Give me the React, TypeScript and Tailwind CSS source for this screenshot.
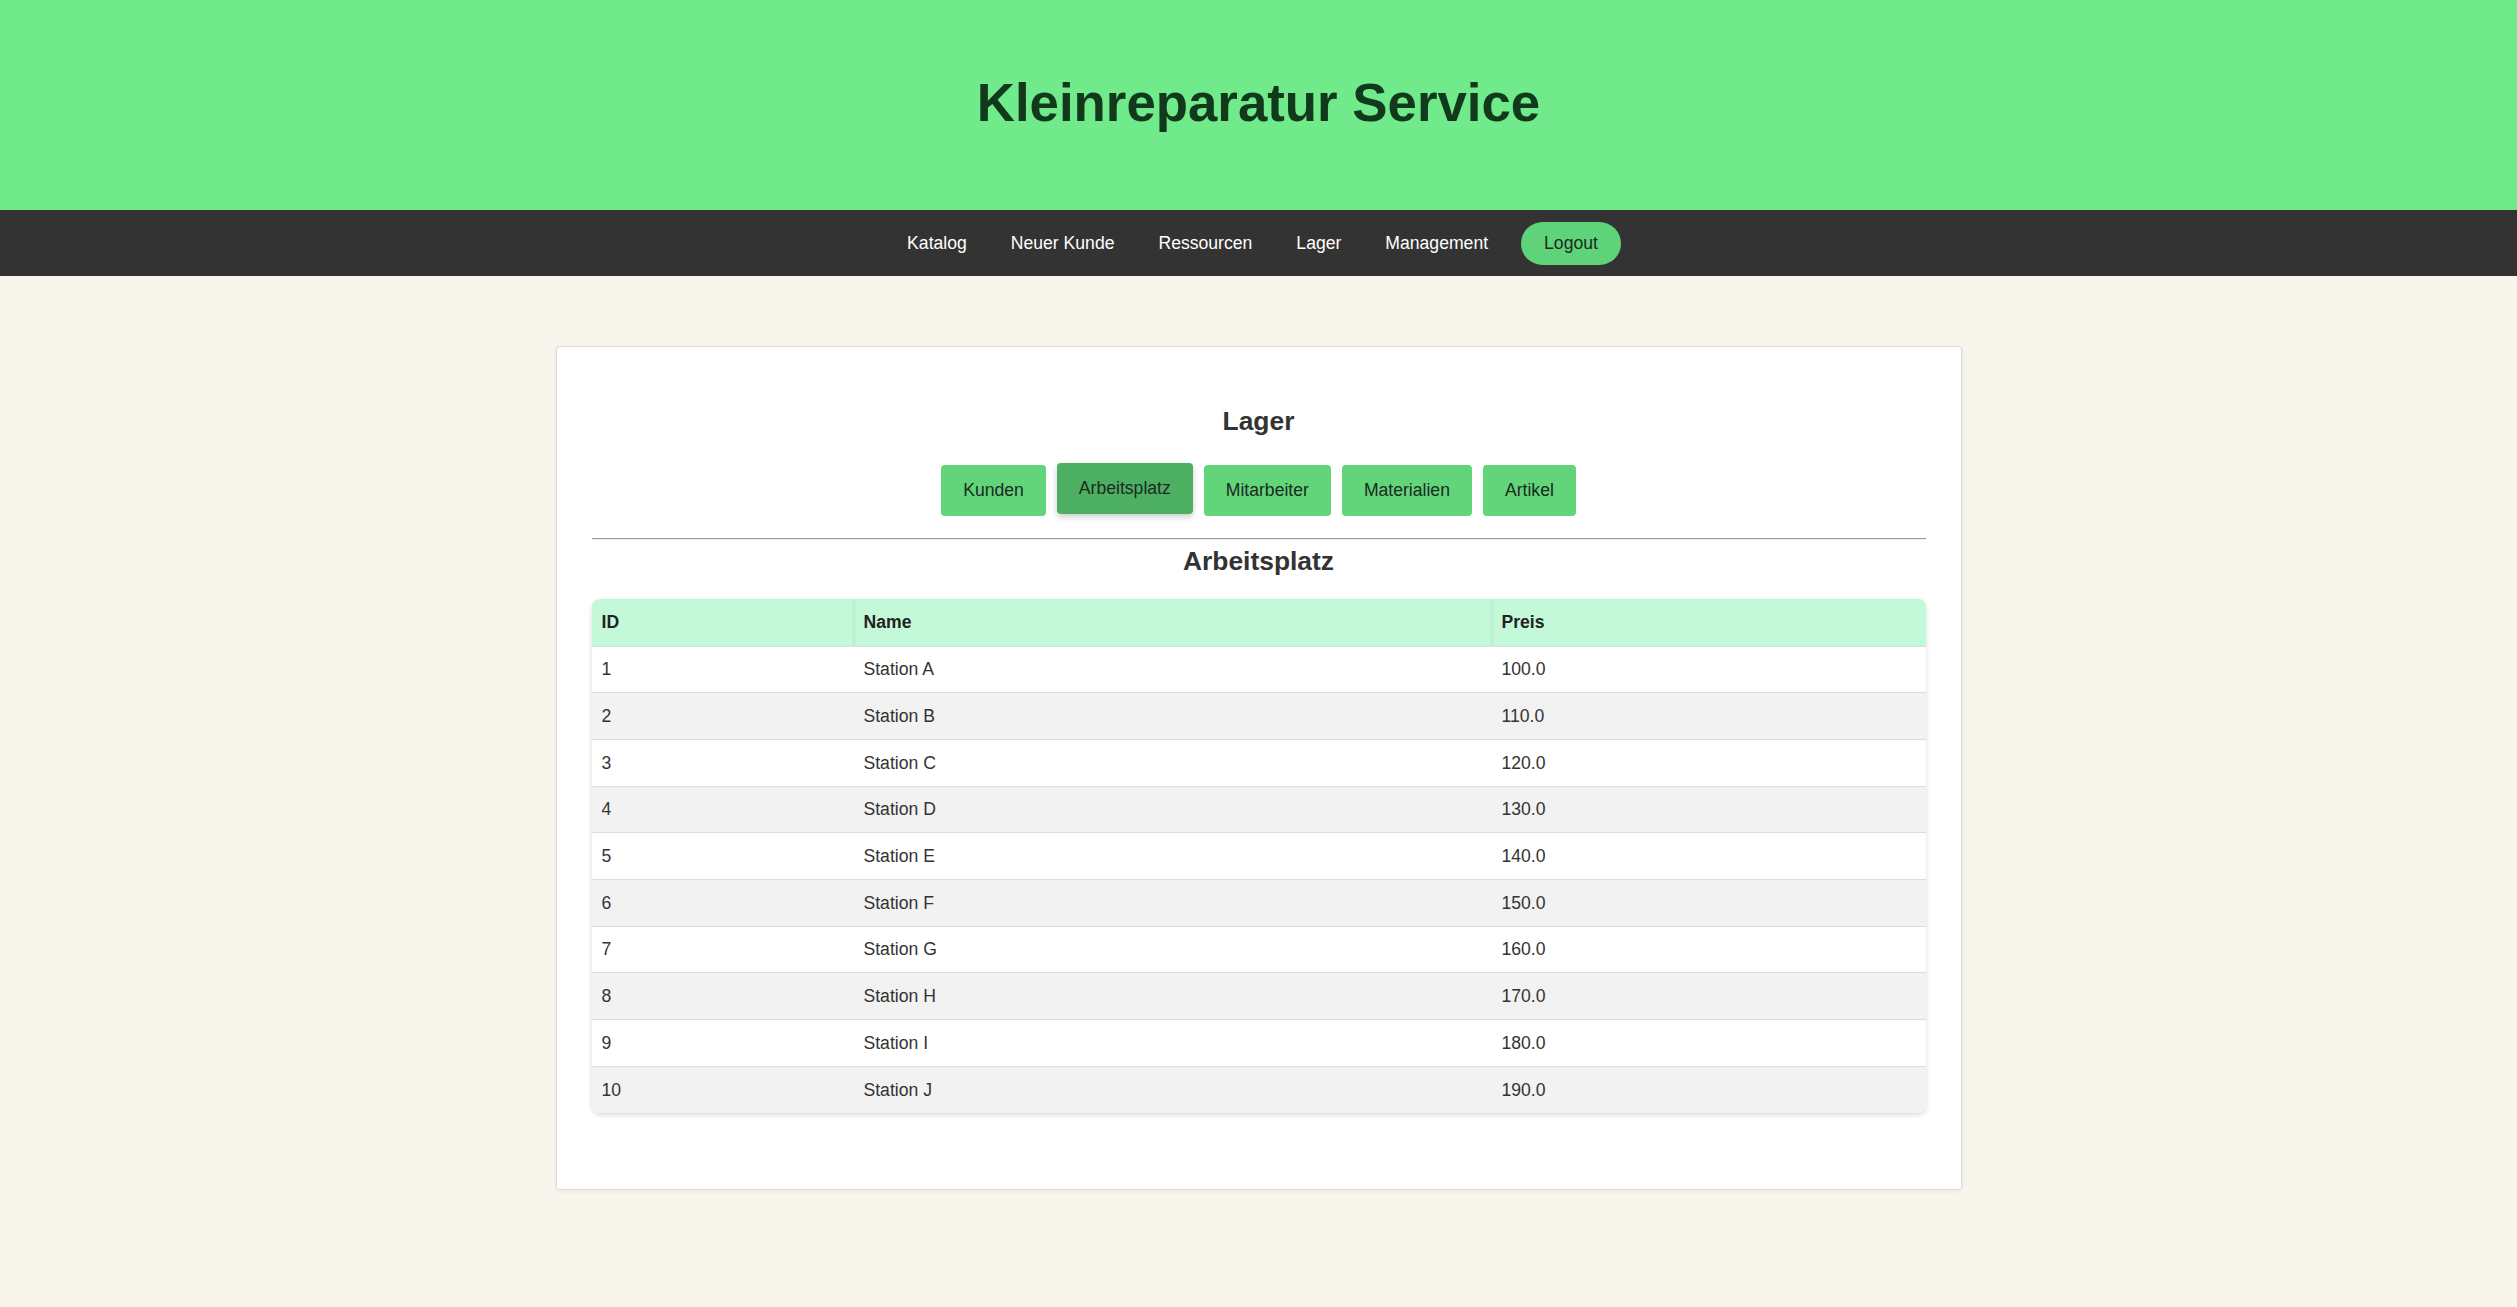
import React, { useState } from "react";

const navLinks = ["Katalog", "Neuer Kunde", "Ressourcen", "Lager", "Management"];
const tabs = ["Kunden", "Arbeitsplatz", "Mitarbeiter", "Materialien", "Artikel"];

const stations = Array.from({ length: 10 }, (_, i) => ({
    id: i + 1,
    name: `Station ${String.fromCharCode(65 + i)}`,
    preis: (100 + i * 10).toFixed(1),
}));

const App: React.FC = () => {
    const [activeTab, setActiveTab] = useState<string>("Arbeitsplatz");

    return (
        <div className="min-h-screen bg-[#f7f5ec] text-[#333] font-['Liberation_Sans',Arial,sans-serif]">
            {/* Kopfbereich */}
            <header className="h-[210px] bg-[#70ea8b] pt-[73px] text-center">
                <h1 className="text-[52.8px] font-bold leading-[60px] text-[#12391b]">Kleinreparatur Service</h1>
            </header>

            {/* Navigation */}
            <nav className="h-[66px] bg-[#333333] flex items-center justify-center">
                {navLinks.map((link) => (
                    <a key={link} href="#" className="px-[22px] text-[17.6px] leading-[20px] text-white">
                        {link}
                    </a>
                ))}
                <button className="mx-[11px] h-[43px] px-[23px] rounded-full bg-[#5fd37a] text-[17.6px] text-[#1c2a1f]">
                    Logout
                </button>
            </nav>

            <main className="flex justify-center pt-[70px] pb-[118px]">
                <div className="w-[1406px] bg-white border border-[#dcdcdc] rounded-[4px] shadow-[0_1px_4px_rgba(0,0,0,0.08)] px-[35px] pt-[59px] pb-[76px]">
                    <h2 className="text-center text-[26.4px] font-bold leading-[30px] text-[#333]">Lager</h2>

                    <div className="flex justify-center gap-[11px] mt-[29px] items-start">
                        {tabs.map((tab) => {
                            const active = tab === activeTab;
                            return (
                                <button
                                    key={tab}
                                    onClick={() => setActiveTab(tab)}
                                    className={
                                        active
                                            ? "h-[51px] px-[22px] rounded-[4px] bg-[#4caf62] text-[17.6px] text-[#1c2a1f] -translate-y-[2px] shadow-[0_3px_6px_rgba(0,0,0,0.2)]"
                                            : "h-[51px] px-[22px] rounded-[4px] bg-[#62d47a] text-[17.6px] text-[#1c2a1f]"
                                    }
                                >
                                    {tab}
                                </button>
                            );
                        })}
                    </div>

                    <hr className="mt-[22px] border-0 border-t border-t-[#9a9a9a] border-b border-b-[#eeeeee]" />

                    <h2 className="mt-[6px] text-center text-[26.4px] font-bold leading-[30px] text-[#333]">{activeTab}</h2>

                    <div className="mt-[23px] rounded-[8px] overflow-hidden shadow-[0_2px_5px_rgba(0,0,0,0.15)]">
                        <table className="w-full table-fixed border-collapse text-left text-[17.6px]">
                            <thead>
                                <tr className="bg-[#c3f9d8] h-[47px]">
                                    <th className="w-[262px] px-[10px] font-bold text-[#222] shadow-[0_2px_3px_rgba(0,0,0,0.1)]">ID</th>
                                    <th className="w-[638px] px-[10px] font-bold text-[#222] shadow-[0_2px_3px_rgba(0,0,0,0.1)]">Name</th>
                                    <th className="px-[10px] font-bold text-[#222] shadow-[0_2px_3px_rgba(0,0,0,0.1)]">Preis</th>
                                </tr>
                            </thead>
                            <tbody>
                                {stations.map((s, i) => (
                                    <tr
                                        key={s.id}
                                        className={
                                            i % 2 === 1
                                                ? "h-[46.7px] bg-[#f2f2f2] border-t border-[#dddddd]"
                                                : "h-[46.7px] bg-white border-t border-[#dddddd]"
                                        }
                                    >
                                        <td className="px-[10px] text-[#333]">{s.id}</td>
                                        <td className="px-[10px] text-[#333]">{s.name}</td>
                                        <td className="px-[10px] text-[#333]">{s.preis}</td>
                                    </tr>
                                ))}
                            </tbody>
                        </table>
                    </div>
                </div>
            </main>
        </div>
    );
};

export default App;
